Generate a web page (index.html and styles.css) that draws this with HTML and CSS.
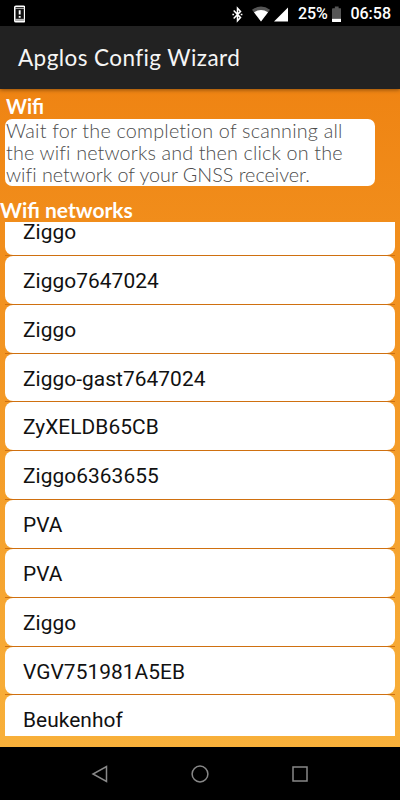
FILE: index.html
```html
<!DOCTYPE html>
<html lang="en">
<head>
  <meta charset="UTF-8" />
  <meta name="viewport" content="width=device-width, initial-scale=1.0"/>
  <title>Apglos Config Wizard</title>
  <link rel="stylesheet" href="styles.css">
</head>
<body>
<div class="status">
  <svg class="phone" width="12" height="18" viewBox="0 0 12 18">
    <rect x="0.8" y="0.8" width="10.4" height="16.4" rx="1.2" fill="#111" stroke="#fff" stroke-width="1.6"/>
    <path d="M1 3h10" stroke="#ccc" stroke-width="1"/>
    <path d="M1 15.2h10" stroke="#bbb" stroke-width="2.2"/>
    <path d="M6 5v4.5M6 11v2" stroke="#fff" stroke-width="2"/>
  </svg>
  <svg class="bluetooth" width="12" height="17" viewBox="0 0 12 17">
    <path d="M1.8 4.2l7.2 7.6-3.2 3.4V1.8L9 5.2l-7.2 7.6" fill="none" stroke="#fff" stroke-width="1.6"/>
    <path d="M0.4 7.6h1.8v1.8H0.4zM9.2 7.6h1.8v1.8H9.2z" fill="#fff"/>
  </svg>
  <svg class="wifi" width="19" height="16" viewBox="0 0 19 16">
    <path d="M0 3.6Q9.5-3.4 19 3.6L9.5 16z" fill="#555"/>
    <path d="M2.1 6.2Q9.5 1.4 16.9 6.2L9.5 16z" fill="#fff"/>
  </svg>
  <svg class="signal" width="15" height="15" viewBox="0 0 15 15">
    <path d="M15 0v15H0z" fill="#fff"/>
  </svg>
  <span class="percent">25%</span>
  <svg class="battery" width="10" height="17" viewBox="0 0 10 17">
    <path d="M3 0h4v2h2q1 0 1 1v10H0V3q0-1 1-1h2z" fill="#555"/>
    <path d="M0 13h10v2.5q0 .9-.9.9H.9q-.9 0-.9-.9z" fill="#fff"/>
  </svg>
  <span class="clock">06:58</span>
</div>
<header>Apglos Config Wizard</header>
<main>
  <h3 class="title">Wifi</h3>
  <p class="info">
    <span class="line1">Wait for the completion of scanning all</span>
    <span class="line2">the wifi networks and then click on the</span>
    <span class="line3">wifi network of your GNSS receiver.</span>
  </p>
  <h3 class="subtitle">Wifi networks</h3>
  <div class="list">
    <div class="row"><div class="network">Ziggo</div></div>
    <div class="row"><div class="network">Ziggo7647024</div></div>
    <div class="row"><div class="network">Ziggo</div></div>
    <div class="row"><div class="network">Ziggo-gast7647024</div></div>
    <div class="row"><div class="network">ZyXELDB65CB</div></div>
    <div class="row"><div class="network">Ziggo6363655</div></div>
    <div class="row"><div class="network">PVA</div></div>
    <div class="row"><div class="network">PVA</div></div>
    <div class="row"><div class="network">Ziggo</div></div>
    <div class="row"><div class="network">VGV751981A5EB</div></div>
    <div class="row"><div class="network">Beukenhof</div></div>
  </div>
</main>
<nav>
  <svg width="18" height="18" viewBox="0 0 18 18"><path d="M15.5 1.5v15L2 9z"/></svg>
  <svg width="18" height="18" viewBox="0 0 18 18"><circle cx="9" cy="9" r="7.9"/></svg>
  <svg width="18" height="18" viewBox="0 0 18 18"><rect x="2" y="2" width="14" height="14"/></svg>
</nav>
</body>
</html>
```
FILE: styles.css
```css
* { box-sizing: border-box; }
body { margin: 0; width: 400px; height: 800px; overflow: hidden; background: #000; font-family: Roboto, sans-serif; display: flex; flex-direction: column; }
.status { height: 26px; display: flex; align-items: center; padding: 2px 9px 0 14px; color: #fff; font-size: 16px; font-weight: 500; line-height: 24px; }
.bluetooth { margin-left: 207px; }
.wifi { margin-left: 8px; }
.signal { margin-left: 4px; }
.percent { width: 29px; margin-left: 10px; white-space: nowrap; }
.battery { margin-left: 5px; }
.clock { margin-left: 9px; white-space: nowrap; }
header { position: relative; height: 63px; padding-left: 18px; background: #222; color: #f5f5f5; font-family: Lato, sans-serif; font-size: 22.5px; line-height: 63px; letter-spacing: 0.42px; box-shadow: 0 1px 4px rgba(0,0,0,.4); }
main { height: 658px; padding: 6px 5px 0; background: linear-gradient(#ef8413, #f8b03a); display: flex; flex-direction: column; }
h3 { margin: 0; color: #fff; font-family: Lato, sans-serif; font-weight: bold; font-size: 21px; line-height: 23px; }
.title { height: 24px; padding-left: 1px; font-size: 20px; }
.info { width: 370px; height: 67px; margin: 0; background: #fff; border-radius: 7px; color: #4c4c4c; font-family: Lato, sans-serif; font-size: 19.8px; line-height: 22px; font-weight: 300; }
.info span { display: block; padding-left: 1px; white-space: nowrap; }
.line1 { letter-spacing: 0.2px; }
.line2 { letter-spacing: 0.13px; }
.line3 { letter-spacing: -0.03px; }
.subtitle { height: 24px; margin: 12px 0 0 -5px; }
.list { height: 514px; overflow: hidden; }
.row { height: 48.85px; border-bottom: 1px solid #cf7010; }
.row:first-child { margin-top: -15px; }
.network { height: 100%; padding-left: 18px; background: #fff; border-radius: 8px; color: #111; font-size: 20.9px; line-height: 50px; letter-spacing: 0.05px; }
nav { height: 53px; display: flex; justify-content: center; align-items: center; gap: 82px; }
nav svg { fill: none; stroke: #888; stroke-width: 1.5; }
```
